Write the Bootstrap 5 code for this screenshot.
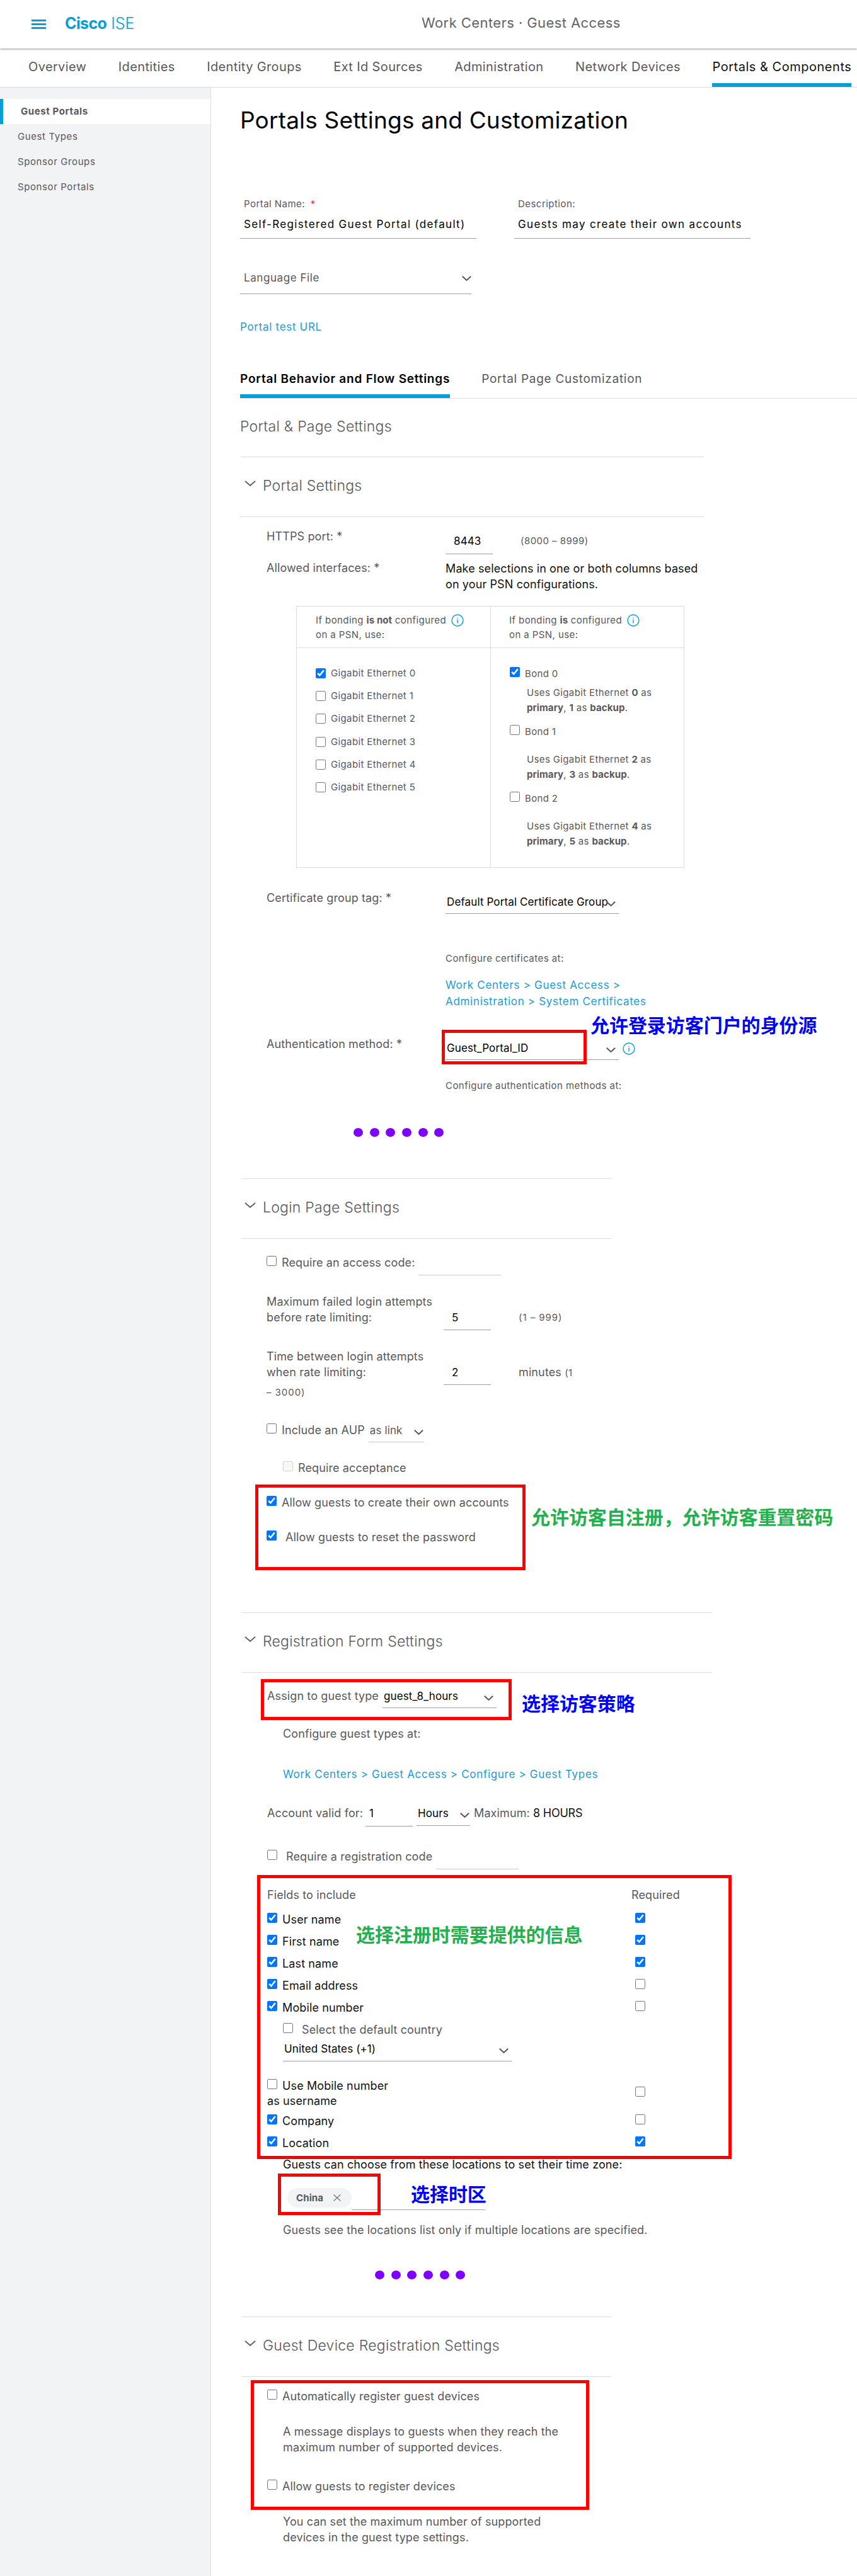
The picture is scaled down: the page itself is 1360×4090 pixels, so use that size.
<!DOCTYPE html>
<html lang="en">
<head>
<meta charset="utf-8">
<title>Cisco ISE – Portals Settings and Customization</title>
<link href="https://cdn.jsdelivr.net/npm/bootstrap@5.3.0/dist/css/bootstrap.min.css" rel="stylesheet">
<style>
  body { font-family: Inter, "Noto Sans CJK SC", sans-serif; font-size: 18px; letter-spacing: .12px; line-height: 24px; color: #58585b; background: #fff; }
  a { color: #1a9cd7; text-decoration: none; }
  .page { width: 1360px; height: 4090px; overflow: hidden; }
  /* header */
  .topbar { height: 77px; box-shadow: 0 1px 3px rgba(0,0,0,.45); padding-left: 50px; z-index: 2; }
  .burger { width: 23px; height: 15px; margin-right: 30px; }
  .brand { font-size: 25px; color: #049fd9; letter-spacing: -.1px; font-weight: 300; width: 566px; margin-top: -4px; }
  .brand b { font-weight: 700; letter-spacing: -.6px; }
  .crumb-title { font-size: 22px; letter-spacing: .42px; color: #626469; margin-top: -6px; }
  .mainnav { height: 62px; border-bottom: 1px solid #dcdddf; padding-left: 45px; gap: 50.5px; font-size: 20px; letter-spacing: .37px; white-space: nowrap; }
  .mainnav a { color: #58585b; line-height: 24px; padding: 17px 0 14px; }
  .mainnav a.current { color: #111; border-bottom: 6px solid #049fd9; letter-spacing: .52px; }
  /* sidebar */
  .shell { height: 3951px; }
  .side { width: 335px; background: #f1f3f5; padding-top: 18px; font-size: 15px; letter-spacing: .6px; border-right: 1px solid #dcdddf; }
  .side a { color: #58585b; height: 40px; padding-left: 28px; }
  .side a.current { background: #fff; border-left: 5px solid #049fd9; font-weight: 700; letter-spacing: .6px; }
  .content { padding-left: 46px; width: 1025px; }
  h1 { font-size: 37px; line-height: 48px; letter-spacing: .18px; color: #000; font-weight: 430; margin: 28px 0 0; }
  /* rows */
  .ln { display: flex; align-items: center; height: 24px; white-space: nowrap; }
  .ln.tall { height: 35px; }
  .para { white-space: nowrap; line-height: 25px; }
  .blk { display: flex; align-items: flex-start; }
  .pair { height: 50px; } .pair .s15 { line-height: 24px; }
  .in1 { margin-left: 42px; } .in2 { margin-left: 68px; } .in-f { margin-left: 43px; } .colv { margin-left: 326px; }
  .c-lbl { width: 284px; flex: none; } .wcol { width: 281px; } .w578 { width: 578px; }
  .ml44 { margin-left: 44px; } .ml6 { margin-left: 6px; } .ml60 { margin-left: 60px; }
  .s15 { font-size: 15px; letter-spacing: .46px; }
  .rng { letter-spacing: .95px; } .tight { letter-spacing: -.25px; }
  .lnk { font-size: 17px; letter-spacing: .69px; line-height: 26px; }
  .ink { color: #111; }
  /* underlined fields */
  .fld { align-self: flex-start; flex: none; border-bottom: 1px solid #9e9ea2; font-size: 17px; line-height: 24px; color: #000; position: relative; white-space: nowrap; height: 32px; padding-left: 2px; }
  .fld.h31 { height: 31px; } .fld.h33 { height: 33px; } .fld.h35 { height: 35px; } .fld.h38 { height: 38px; }
  .fld.off { border-color: #c6c7ca; color: #58585b; }
  .fld svg { position: absolute; right: 5px; top: 11px; }
  .fld svg.edge { right: 1px; }
  .fld.w75 { width: 75px; padding-left: 13px; }
  .fld.acct { margin-left: 4px; padding-left: 6px; }
  .fld.wide-ls { letter-spacing: 1.33px; padding-left: 6px; }
  .fld.s-lang { letter-spacing: .57px; padding-left: 6px; color: #58585b; }
  .fld.s-lang svg { right: 0; top: 9px; }
  .f375{width:375px}.f367{width:367px}.f363{width:363px}.f275{width:275px}.f212{width:212px}.f181{width:181px}.f131{width:131px}.f88{width:88px}.f85{width:85px}
  .cap-a { padding-left: 6px; } .cap-b { margin-left: 66px; }
  .chev { width: 15px; height: 8px; fill: none; stroke: #58585b; stroke-width: 2; }
  .chev.big { width: 18px; height: 9px; stroke-width: 1.6; }
  .info { width: 20px; height: 20px; fill: none; stroke: #049fd9; stroke-width: 1.4; flex: none; }
  input[type=checkbox] { width: 16px; height: 16px; margin: 0 8px 6px 0; flex: none; accent-color: #0075ff; }
  input[type=checkbox].gap-l { margin-right: 14px; }
  /* sections */
  .rule { height: 1px; background: #dcdddf; margin-left: 2px; width: 587px; }
  .rule.long { width: 735px; margin-left: 1px; } .rule.mid { width: 748px; }
  .sec-title { display: flex; height: 24px; margin: 33px 0 37px 7px; font-size: 23px; line-height: 24px; letter-spacing: .25px; font-weight: 350; }
  .sec-title.pg { margin: 32px 0 0; }
  .sec-title .chev { margin: 4px 11px 0 0; }
  .tabs { height: 44px; border-bottom: 1px solid #dcdddf; font-size: 19px; gap: 50px; }
  .tabs a { color: #58585b; letter-spacing: .72px; height: 43px; padding-top: 1px; }
  .tabs a.current { color: #000; font-weight: 600; letter-spacing: .77px; border-bottom: 6px solid #049fd9; }
  /* interface table */
  .bond { margin: 22px 0 0 89px; width: 616px; height: 416px; border: 1px solid #dcdddf; font-size: 15px; letter-spacing: .36px; }
  .bond > div { width: 308px; }
  .bond > div + div { border-left: 1px solid #dcdddf; }
  .bond .hd { height: 66px; border-bottom: 1px solid #dcdddf; padding: 10px 0 0 30px; line-height: 23px; white-space: nowrap; letter-spacing: .42px; }
  .bond > div + div .hd { padding-left: 29px; }
  .bond .bd { padding: 22px 0 0 30px; }
  .bond .bd.two { padding: 29px 0 0 30px; }
  .bond .eth { height: 36.2px; display: flex; align-items: center; }
  .bond .eth input { margin-bottom: 0; }
  .bond .uses { margin-left: 27px; line-height: 24px; }
  .bond b { font-weight: 700; letter-spacing: .1px; }
  .bond .info { margin: -1px 0 0 3px; }
  .dots { display: flex; align-items: center; gap: 10.7px; height: 24px; margin-left: 180px; }
  .dots i { width: 15px; height: 14px; border-radius: 50%; background: #8000ff; }
  .dots.second { margin-left: 214px; }
  .frow { display: flex; align-items: center; height: 35px; margin-left: 43px; color: #111; white-space: nowrap; }
  .frow.two-line { height: 48px; }
  .frow .c-lab { width: 584px; display: flex; align-items: center; }
  .chips { margin-left: 75px; height: 35px; }
  .tag { height: 31px; width: 102px; border-radius: 16px; background: #f1f3f5; padding-left: 14px; font-weight: 700; font-size: 15px; }
  .tag svg { width: 12px; height: 11px; stroke: #77787b; stroke-width: 1.3; margin-left: 16px; margin-top: -1px; }
  /* vertical distances between rows */
  .t1{margin-top:1px}.t2{margin-top:2px}.t5{margin-top:5px}.t6{margin-top:6px}.t7{margin-top:7px}.t8{margin-top:8px}.t9{margin-top:9px}.t14{margin-top:14px}.t17{margin-top:17px}.t19{margin-top:19px}.t20{margin-top:20px}.t25{margin-top:25px}.t26{margin-top:26px}.t31{margin-top:31px}.t35{margin-top:35px}.t36{margin-top:36px}.t37{margin-top:37px}.t38{margin-top:38px}.t40{margin-top:40px}.t42{margin-top:42px}.t43{margin-top:43px}.t45{margin-top:45px}.t47{margin-top:47px}.t50{margin-top:50px}.t54{margin-top:54px}.t58{margin-top:58px}.t61{margin-top:61px}.t72{margin-top:72px}.t97{margin-top:97px}.t107{margin-top:107px}
  /* annotations drawn over the page */
  .box { position: absolute; border: 5px solid #f00; z-index: 3; }
  .note { position: absolute; z-index: 3; font: 700 30px/30px "Noto Sans CJK SC", sans-serif; letter-spacing: -.05px; white-space: nowrap; color: #00f; }
  .note.green { color: #22b14c; }
  .b1{left:701px;top:1635px;width:230px;height:55px}.b2{left:405px;top:2357px;width:429px;height:136px}
  .b3{left:414px;top:2666px;width:398px;height:65px}.b4{left:408px;top:2977px;width:753px;height:451px}
  .b5{left:441px;top:3451px;width:163px;height:66px}.b6{left:398px;top:3779px;width:537px;height:206px}
  .n1{left:937px;top:1611px}.n2{left:843px;top:2392px}.n3{left:828px;top:2688px}.n4{left:565px;top:3055px}.n5{left:652px;top:3467px}
</style>
</head>
<body>
<svg width="0" height="0" class="position-absolute">
  <symbol id="chev" viewBox="0 0 15 8" preserveAspectRatio="none"><path d="M.8.7 7.5 7 14.2.7"/></symbol>
  <symbol id="info" viewBox="0 0 20 20"><circle cx="10" cy="10" r="9"/><path d="M10 8.5v6M10 5.4v1.4"/></symbol>
</svg>
<div class="page position-relative">
  <header class="topbar d-flex align-items-center position-relative bg-white">
    <svg class="burger" viewBox="0 0 23 15" fill="#049fd9"><path d="M0 0h23v3H0zM0 6h23v3H0zM0 12h23v3H0z"/></svg>
    <div class="brand"><b>Cisco</b> ISE</div>
    <div class="crumb-title">Work Centers · Guest Access</div>
  </header>
  <nav class="mainnav d-flex">
    <a href="#">Overview</a><a href="#">Identities</a><a href="#">Identity Groups</a><a href="#">Ext Id Sources</a><a href="#">Administration</a><a href="#">Network Devices</a><a href="#" class="current">Portals &amp; Components</a>
  </nav>
  <div class="shell d-flex">
    <aside class="side d-flex flex-column flex-shrink-0">
      <a href="#" class="current d-flex align-items-center">Guest Portals</a>
      <a href="#" class="d-flex align-items-center">Guest Types</a>
      <a href="#" class="d-flex align-items-center">Sponsor Groups</a>
      <a href="#" class="d-flex align-items-center">Sponsor Portals</a>
    </aside>
    <main class="content">
      <h1>Portals Settings and Customization</h1>
      <div class="ln t97 s15"><span class="f375 cap-a">Portal Name: <span class="text-danger ps-1">*</span></span><span class="cap-b">Description:</span></div>
      <div class="ln t8"><span class="fld h35 wide-ls f375">Self-Registered Guest Portal (default)</span><span class="fld h35 wide-ls f375 ml60">Guests may create their own accounts</span></div>
      <div class="ln t61"><span class="fld h38 f367 s-lang">Language File<svg class="chev"><use href="#chev"/></svg></span></div>
      <div class="ln t54 lnk"><a href="#">Portal test URL</a></div>
      <nav class="tabs d-flex t58"><a href="#" class="current">Portal Behavior and Flow Settings</a><a href="#">Portal Page Customization</a></nav>
      <div class="sec-title pg">Portal &amp; Page Settings</div>
      <div class="rule long t36"></div>

      <div class="sec-title"><svg class="chev big"><use href="#chev"/></svg>Portal Settings</div>
      <div class="rule long"></div>
      <div class="ln align-items-start in1 t19"><span class="c-lbl">HTTPS port: *</span><span class="fld h33 w75 t7">8443</span><span class="s15 t7 ml44">(8000 – 8999)</span></div>
      <div class="blk in1 t26"><span class="c-lbl">Allowed interfaces: *</span><div class="para ink">Make selections in one or both columns based<br>on your PSN configurations.</div></div>
      <div class="bond d-flex">
        <div>
          <div class="hd">If bonding <b>is not</b> configured <svg class="info"><use href="#info"/></svg><br>on a PSN, use:</div>
          <div class="bd">
            <div class="eth"><input type="checkbox" checked>Gigabit Ethernet 0</div>
            <div class="eth"><input type="checkbox">Gigabit Ethernet 1</div>
            <div class="eth"><input type="checkbox">Gigabit Ethernet 2</div>
            <div class="eth"><input type="checkbox">Gigabit Ethernet 3</div>
            <div class="eth"><input type="checkbox">Gigabit Ethernet 4</div>
            <div class="eth"><input type="checkbox">Gigabit Ethernet 5</div>
          </div>
        </div>
        <div>
          <div class="hd">If bonding <b>is</b> configured <svg class="info"><use href="#info"/></svg><br>on a PSN, use:</div>
          <div class="bd two">
            <div class="ln"><input type="checkbox" checked>Bond 0</div>
            <div class="uses t6">Uses Gigabit Ethernet <b>0</b> as<br><b>primary</b>, <b>1</b> as <b>backup</b>.</div>
            <div class="ln t14"><input type="checkbox">Bond 1</div>
            <div class="uses t20">Uses Gigabit Ethernet <b>2</b> as<br><b>primary</b>, <b>3</b> as <b>backup</b>.</div>
            <div class="ln t14"><input type="checkbox">Bond 2</div>
            <div class="uses t20">Uses Gigabit Ethernet <b>4</b> as<br><b>primary</b>, <b>5</b> as <b>backup</b>.</div>
          </div>
        </div>
      </div>
      <div class="ln align-items-start in1 t36"><span class="c-lbl">Certificate group tag: *</span><span class="fld h31 t6 f275">Default Portal Certificate Group<svg class="chev"><use href="#chev"/></svg></span></div>
      <div class="ln colv s15 t72">Configure certificates at:</div>
      <div class="colv lnk t17"><a href="#">Work Centers &gt; Guest Access &gt;<br>Administration &gt; System Certificates</a></div>
      <div class="ln align-items-start in1 t43"><span class="c-lbl">Authentication method: *</span><span class="fld h31 t6 f275">Guest_Portal_ID<svg class="chev"><use href="#chev"/></svg></span><svg class="info t9 ml6"><use href="#info"/></svg></div>
      <div class="ln colv s15 t42">Configure authentication methods at:</div>
      <div class="dots t50"><i></i><i></i><i></i><i></i><i></i><i></i></div>

      <div class="rule t61"></div>
      <div class="sec-title"><svg class="chev big"><use href="#chev"/></svg>Login Page Settings</div>
      <div class="rule"></div>
      <div class="ln in1 t26"><input type="checkbox">Require an access code:<span class="fld off f131 ml6"></span></div>
      <div class="blk in1 t37 pair"><div class="para wcol">Maximum failed login attempts<br>before rate limiting:</div><span class="fld w75 t26">5</span><span class="s15 rng t26 ml44">(1 – 999)</span></div>
      <div class="blk in1 t37 pair"><div class="para wcol">Time between login attempts<br>when rate limiting:</div><span class="fld w75 t26">2</span><span class="t26 ml44">minutes <span class="s15">(1</span></span></div>
      <div class="ln in1 s15 rng t8">– 3000)</div>
      <div class="ln in1 t36"><input type="checkbox">Include an AUP<span class="fld h31 off f88 ml6">as link<svg class="chev edge"><use href="#chev"/></svg></span></div>
      <div class="ln t36 in2"><input type="checkbox" disabled>Require acceptance</div>
      <div class="ln in1 t31"><input type="checkbox" checked>Allow guests to create their own accounts</div>
      <div class="ln in1 t31"><input type="checkbox" checked class="gap-l">Allow guests to reset the password</div>

      <div class="rule mid t107"></div>
      <div class="sec-title"><svg class="chev big"><use href="#chev"/></svg>Registration Form Settings</div>
      <div class="rule mid"></div>
      <div class="ln t25 in-f">Assign to guest type<span class="fld h31 f181 ml6">guest_8_hours<svg class="chev"><use href="#chev"/></svg></span></div>
      <div class="ln in2 t36">Configure guest types at:</div>
      <div class="ln in2 lnk t40"><a href="#">Work Centers &gt; Guest Access &gt; Configure &gt; Guest Types</a></div>
      <div class="ln t38 in-f">Account valid for:<span class="fld h33 w75 acct">1</span><span class="fld f85 ml6">Hours<svg class="chev edge"><use href="#chev"/></svg></span><span class="ml6">Maximum: <span class="ink tight">8 HOURS</span></span></div>
      <div class="ln t45 in-f"><input type="checkbox" class="gap-l">Require a registration code<span class="fld off f131 ml6"></span></div>
      <div class="ln t37 in-f"><span class="w578">Fields to include</span>Required</div>
      <div class="frow t9"><span class="c-lab"><input type="checkbox" checked>User name</span><input type="checkbox" checked></div>
      <div class="frow"><span class="c-lab"><input type="checkbox" checked>First name</span><input type="checkbox" checked></div>
      <div class="frow"><span class="c-lab"><input type="checkbox" checked>Last name</span><input type="checkbox" checked></div>
      <div class="frow"><span class="c-lab"><input type="checkbox" checked>Email address</span><input type="checkbox"></div>
      <div class="frow"><span class="c-lab"><input type="checkbox" checked>Mobile number</span><input type="checkbox"></div>
      <div class="ln in2 tall"><input type="checkbox" class="gap-l">Select the default country</div>
      <div class="ln in2 t1"><span class="fld f363">United States (+1)<svg class="chev"><use href="#chev"/></svg></span></div>
      <div class="frow t35 two-line"><span class="c-lab d-block"><span class="ln"><input type="checkbox">Use Mobile number</span><span class="ln">as username</span></span><input type="checkbox"></div>
      <div class="frow t2"><span class="c-lab"><input type="checkbox" checked>Company</span><input type="checkbox"></div>
      <div class="frow"><span class="c-lab"><input type="checkbox" checked>Location</span><input type="checkbox" checked></div>
      <div class="ln in2 t5 ink">Guests can choose from these locations to set their time zone:</div>
      <div class="d-flex t25 chips"><span class="tag d-flex align-items-center">China<svg viewBox="0 0 12 11"><path d="M.5.5l11 10M11.5.5l-11 10"/></svg></span><span class="fld h35 f212"></span></div>
      <div class="ln in2 t20">Guests see the locations list only if multiple locations are specified.</div>
      <div class="dots second t47"><i></i><i></i><i></i><i></i><i></i><i></i></div>

      <div class="rule t54"></div>
      <div class="sec-title"><svg class="chev big"><use href="#chev"/></svg>Guest Device Registration Settings</div>
      <div class="rule"></div>
      <div class="ln t19 in-f"><input type="checkbox">Automatically register guest devices</div>
      <div class="para in2 t31">A message displays to guests when they reach the<br>maximum number of supported devices.</div>
      <div class="ln t38 in-f"><input type="checkbox">Allow guests to register devices</div>
      <div class="para in2 t31">You can set the maximum number of supported<br>devices in the guest type settings.</div>
    </main>
  </div>

  <div class="box b1"></div><div class="box b2"></div><div class="box b3"></div><div class="box b4"></div><div class="box b5"></div><div class="box b6"></div>
  <div class="note n1">允许登录访客门户的身份源</div>
  <div class="note green n2">允许访客自注册，允许访客重置密码</div>
  <div class="note n3">选择访客策略</div>
  <div class="note green n4">选择注册时需要提供的信息</div>
  <div class="note n5">选择时区</div>
</div>
<script src="https://cdn.jsdelivr.net/npm/bootstrap@5.3.0/dist/js/bootstrap.bundle.min.js"></script>
</body>
</html>
